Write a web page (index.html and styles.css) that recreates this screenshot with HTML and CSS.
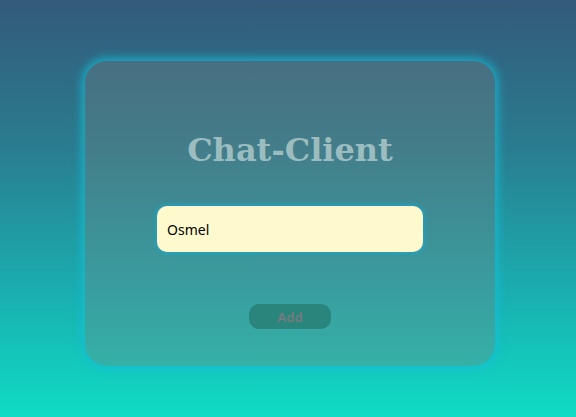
FILE: index.html
```html
<!DOCTYPE html>
<html>
<head>
<meta charset="utf-8">
<link rel="stylesheet" href="styles.css">
</head>
<body>
<main class="page">
  <section class="card">
    <h1 class="title">Chat-Client</h1>
    <div class="field">Osmel</div>
    <button class="add">Add</button>
  </section>
</main>
</body>
</html>
```
FILE: styles.css
```css
html, body {
  margin: 0;
  height: 100%;
}
body {
  background: linear-gradient(180deg, #335a7a 0%, #2a7c8f 35%, #1aaeb0 70%, #0fdcc4 100%);
  font-family: "Noto Sans", "DejaVu Sans", sans-serif;
}
.page {
  height: 417px;
  display: flex;
  justify-content: center;
  padding: 61px 0 0 4px;
  box-sizing: border-box;
}
.card {
  width: 410px;
  height: 305px;
  box-sizing: border-box;
  border-radius: 22px;
  background: rgba(120, 128, 128, 0.33);
  box-shadow: 0 0 10px 3px rgba(20, 190, 215, 0.8);
  display: flex;
  flex-direction: column;
  align-items: center;
}
.title {
  margin: 69px 0 0;
  font-family: "DejaVu Serif", serif;
  font-weight: bold;
  font-size: 32px;
  line-height: 40px;
  color: #9bbdc0;
}
.field {
  margin-top: 36px;
  width: 266px;
  height: 46px;
  box-sizing: border-box;
  padding: 0 10px;
  display: flex;
  align-items: center;
  border-radius: 10px;
  background: #fffacd;
  color: #000;
  font-size: 14px;
  box-shadow: 0 0 5px 1px rgba(20, 170, 210, 0.85);
}
.add {
  margin-top: 52px;
  width: 82px;
  height: 25px;
  border: none;
  border-radius: 10px;
  background: #2a857d;
  color: #6f7c7c;
  font-family: "Noto Sans", "DejaVu Sans", sans-serif;
  font-weight: bold;
  font-size: 13px;
  padding: 0;
}
```
